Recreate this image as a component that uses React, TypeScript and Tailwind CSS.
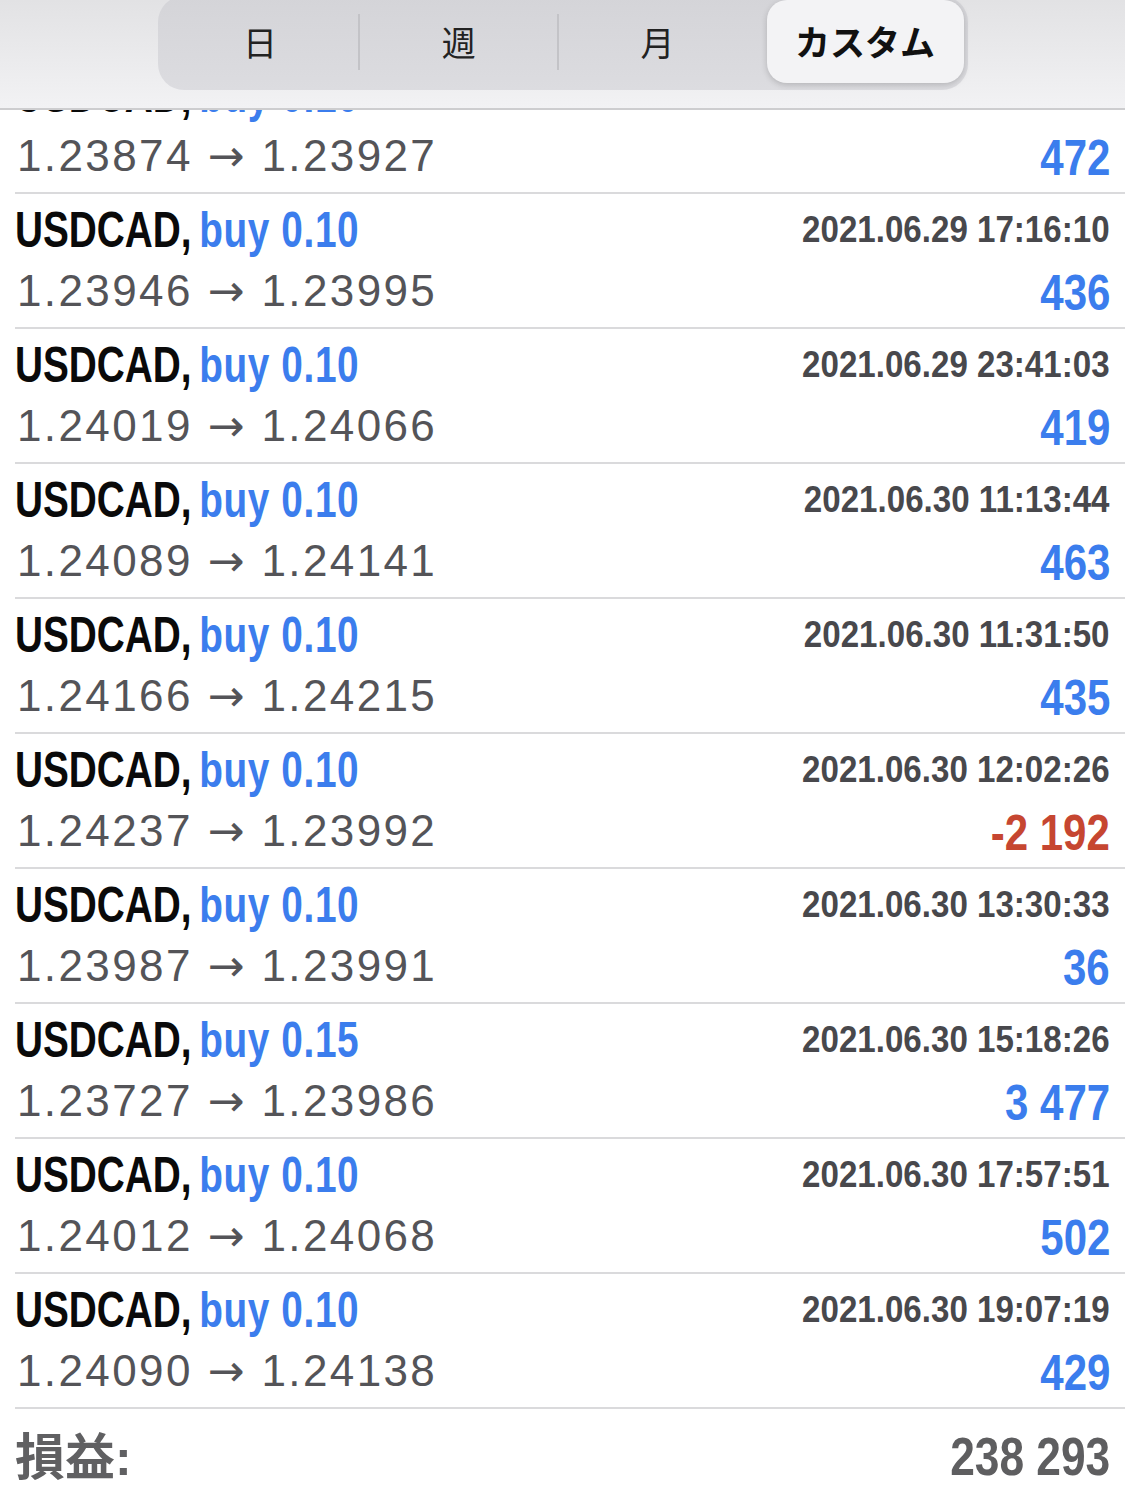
import React from "react";

type Trade = {
  lots: string;
  time: string;
  open: string;
  close: string;
  profit: string;
};

const trades: Trade[] = [
  { lots: "0.10", time: "2021.06.29 15:02:41", open: "1.23874", close: "1.23927", profit: "472" },
  { lots: "0.10", time: "2021.06.29 17:16:10", open: "1.23946", close: "1.23995", profit: "436" },
  { lots: "0.10", time: "2021.06.29 23:41:03", open: "1.24019", close: "1.24066", profit: "419" },
  { lots: "0.10", time: "2021.06.30 11:13:44", open: "1.24089", close: "1.24141", profit: "463" },
  { lots: "0.10", time: "2021.06.30 11:31:50", open: "1.24166", close: "1.24215", profit: "435" },
  { lots: "0.10", time: "2021.06.30 12:02:26", open: "1.24237", close: "1.23992", profit: "-2 192" },
  { lots: "0.10", time: "2021.06.30 13:30:33", open: "1.23987", close: "1.23991", profit: "36" },
  { lots: "0.15", time: "2021.06.30 15:18:26", open: "1.23727", close: "1.23986", profit: "3 477" },
  { lots: "0.10", time: "2021.06.30 17:57:51", open: "1.24012", close: "1.24068", profit: "502" },
  { lots: "0.10", time: "2021.06.30 19:07:19", open: "1.24090", close: "1.24138", profit: "429" },
];

// no condensed face is installed, so the bold texts are squeezed with scale-x
const sans = "font-['Liberation_Sans',sans-serif]";

function TradeRow({ trade }: { trade: Trade }) {
  const loss = trade.profit.startsWith("-");
  return (
    <div className="ml-[15px] h-[135px] border-b-2 border-[#dadadc] pr-[15px]">
      <div className="flex items-start justify-between">
        <div
          className={`${sans} mt-[11px] inline-block origin-left scale-x-[0.775] whitespace-nowrap text-[50px] font-bold leading-[50px] text-[#0a0a0a]`}
        >
          USDCAD,{" "}
          <span className="ml-[-4px] tracking-[0.8px] text-[#3b7ded]">buy {trade.lots}</span>
        </div>
        <div
          className={`${sans} mt-[17px] inline-block origin-right scale-x-[0.895] whitespace-nowrap text-[37px] font-bold leading-[37px] text-[#48484c]`}
        >
          {trade.time}
        </div>
      </div>
      <div className="flex items-start justify-between">
        <div
          className={`${sans} mt-[14px] pl-[2px] text-[44px] leading-[44px] tracking-[2.4px] whitespace-nowrap text-[#545458]`}
        >
          {trade.open} <span className="font-['DejaVu_Sans',sans-serif]">→</span> {trade.close}
        </div>
        <div
          className={`${sans} mt-[13px] inline-block origin-right scale-x-[0.84] whitespace-nowrap text-[50px] font-bold leading-[50px] ${
            loss ? "text-[#c64631]" : "text-[#3b7ded]"
          }`}
        >
          {trade.profit}
        </div>
      </div>
    </div>
  );
}

function Segments() {
  const cjk = "font-['Noto_Sans_CJK_JP',sans-serif]";
  return (
    <div className="mx-auto mt-[-4px] flex h-[94px] w-[810px] items-stretch rounded-[26px] bg-gradient-to-b from-[#d4d4d8] to-[#dcdce0] px-[4px] pb-[7px] pt-[4px]">
      <div className={`${cjk} flex flex-1 items-center justify-center text-[34px] text-[#222]`}>日</div>
      <div className="my-auto h-[56px] w-[2px] bg-[#c3c3c7]" />
      <div className={`${cjk} flex flex-1 items-center justify-center text-[34px] text-[#222]`}>週</div>
      <div className="my-auto h-[56px] w-[2px] bg-[#c3c3c7]" />
      <div className={`${cjk} flex flex-1 items-center justify-center text-[34px] text-[#222]`}>月</div>
      <div className="flex flex-1 pl-[11px]">
        <div
          className={`${cjk} flex flex-1 items-center justify-center rounded-[20px] bg-[#f3f3f5] text-[35px] font-bold text-[#111] shadow-[0_2px_6px_rgba(0,0,0,0.18)]`}
        >
          カスタム
        </div>
      </div>
    </div>
  );
}

export default function App() {
  return (
    <div className="relative h-[1497px] w-[1125px] overflow-hidden bg-white">
      <header className="absolute inset-x-0 top-0 z-10 h-[110px] border-b-2 border-[#cdcdcf] bg-gradient-to-b from-[#e2e2e4] to-[#f2f2f4]">
        <Segments />
      </header>

      <main className="pt-[59px]">
        {trades.map((t, i) => (
          <TradeRow key={i} trade={t} />
        ))}

        <div className="ml-[15px] flex items-baseline justify-between pr-[15px] pt-[21px]">
          <div className="font-['Liberation_Sans','Noto_Sans_CJK_JP',sans-serif] text-[50px] font-bold leading-[52px] text-[#606062]">
            損益:
          </div>
          <div
            className={`${sans} inline-block origin-right scale-x-[0.82] text-[54px] font-bold leading-[52px] text-[#5e5e60]`}
          >
            238 293
          </div>
        </div>
      </main>
    </div>
  );
}
